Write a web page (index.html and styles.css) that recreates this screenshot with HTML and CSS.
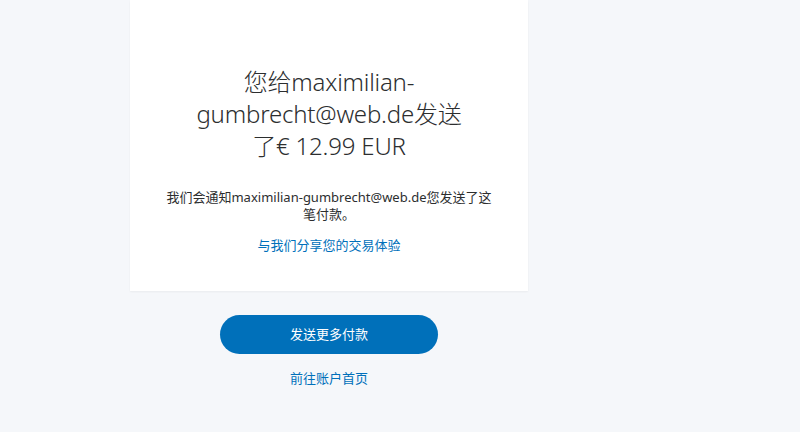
FILE: index.html
```html
<!DOCTYPE html>
<html lang="zh">
<head>
    <meta charset="UTF-8">
    <meta name="viewport" content="width=device-width, initial-scale=1.0">
    <title>付款已发送</title>
    <link rel="stylesheet" href="styles.css">
</head>
<body>
    <div class="page">
        <div class="card">
            <h1 class="title">您给maximilian-gumbrecht@web.de发送了€ 12.99 EUR</h1>
            <p class="note">我们会通知maximilian-gumbrecht@web.de您发送了这笔付款。</p>
            <a class="link" href="#">与我们分享您的交易体验</a>
        </div>
        <div class="actions">
            <a class="btn" href="#">发送更多付款</a>
            <a class="link" href="#">前往账户首页</a>
        </div>
    </div>
</body>
</html>
```

FILE: styles.css
```css
body {
    margin: 0;
    background: #f5f7fa;
    font-family: "Noto Sans", "Noto Sans CJK SC", sans-serif;
    color: #2c2e2f;
}
.page {
    width: 398px;
    margin-left: 130px;
}
.card {
    background: #fff;
    height: 291px;
    box-sizing: border-box;
    padding: 66px 40px 0;
    text-align: center;
    box-shadow: 0 1px 2px rgba(0, 0, 0, 0.05);
}
.title {
    font-size: 24px;
    font-weight: 300;
    line-height: 32px;
    letter-spacing: -0.2px;
    margin: 0 auto;
    max-width: 276px;
}
.note {
    font-size: 13px;
    line-height: 17px;
    margin: 27px -6px 10px;
}
.link {
    color: #0070ba;
    font-size: 13px;
    text-decoration: none;
}
.actions {
    display: flex;
    flex-direction: column;
    align-items: center;
    padding-top: 24px;
    gap: 14px;
}
.btn {
    width: 218px;
    height: 39px;
    line-height: 39px;
    border-radius: 20px;
    background: #0070ba;
    color: #fff;
    font-size: 13px;
    text-align: center;
    text-decoration: none;
}
```
